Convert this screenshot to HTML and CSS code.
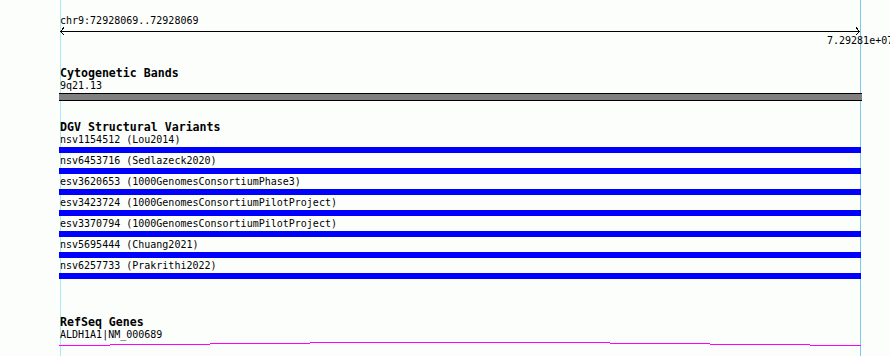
FILE: index.html
```html
<!DOCTYPE html>
<html>
  <head>
    <meta charset="utf-8">
    <meta name="viewport" content="width=device-width, initial-scale=1.0">
    <title>Track view</title>
    <link rel="stylesheet" href="styles.css">
  </head>
  <body>
    <div class="view">
      <div class="tracks">
        <div class="ruler">
          <div class="ruler-label">chr9:72928069..72928069</div>
          <svg class="ruler-axis" width="800" height="8" viewBox="0 0 800 8">
            <line x1="0" y1="4.5" x2="800" y2="4.5" />
            <polyline points="4,0.5 0.5,4.5 4,8" />
            <polyline points="796,0.5 799.5,4.5 796,8" />
          </svg>
          <div class="ruler-end">7.29281e+07</div>
        </div>

        <section class="track track-bands">
          <h2>Cytogenetic Bands</h2>
          <div class="feature-label">9q21.13</div>
          <div class="band"></div>
        </section>

        <section class="track track-dgv">
          <h2>DGV Structural Variants</h2>
          <div class="feature">
            <div class="feature-label">nsv1154512 (Lou2014)</div>
            <div class="bar"></div>
          </div>
          <div class="feature">
            <div class="feature-label">nsv6453716 (Sedlazeck2020)</div>
            <div class="bar"></div>
          </div>
          <div class="feature">
            <div class="feature-label">esv3620653 (1000GenomesConsortiumPhase3)</div>
            <div class="bar"></div>
          </div>
          <div class="feature">
            <div class="feature-label">esv3423724 (1000GenomesConsortiumPilotProject)</div>
            <div class="bar"></div>
          </div>
          <div class="feature">
            <div class="feature-label">esv3370794 (1000GenomesConsortiumPilotProject)</div>
            <div class="bar"></div>
          </div>
          <div class="feature">
            <div class="feature-label">nsv5695444 (Chuang2021)</div>
            <div class="bar"></div>
          </div>
          <div class="feature">
            <div class="feature-label">nsv6257733 (Prakrithi2022)</div>
            <div class="bar"></div>
          </div>
        </section>

        <section class="track track-genes">
          <h2>RefSeq Genes</h2>
          <div class="feature-label">ALDH1A1|NM_000689</div>
          <svg class="gene" width="802" height="6" viewBox="0 0 802 6">
            <rect x="0" y="4" width="51" height="1" />
            <rect x="51" y="3" width="100" height="1" />
            <rect x="151" y="2" width="100" height="1" />
            <rect x="251" y="1" width="300" height="1" />
            <rect x="551" y="2" width="100" height="1" />
            <rect x="651" y="3" width="100" height="1" />
            <rect x="751" y="4" width="51" height="1" />
          </svg>
        </section>
      </div>
    </div>
  </body>
</html>
```

FILE: styles.css
```css
html, body {
  width: 100%;
  height: 100%;
  margin: 0;
  padding: 0;
  background-color: #fcfefc;
  color: #000;
  font-family: "DejaVu Sans Mono", "Liberation Mono", monospace;
  font-size: 10px;
  overflow: hidden;
}
.view {
  position: relative;
  width: 890px;
  height: 356px;
  box-sizing: border-box;
  padding: 15px 0 0 60px;
}
/* guide lines at the view edges, behind the tracks */
.view::before,
.view::after {
  content: "";
  position: absolute;
  top: 0;
  bottom: 0;
  width: 1px;
  z-index: 0;
}
.view::before {
  left: 60px;
  background: #a8ecf0;
}
.view::after {
  left: 860px;
  background: #7ec8f0;
}
.tracks {
  position: relative;
  z-index: 1;
  width: 800px;
  display: flex;
  flex-direction: column;
}
.ruler-label,
.ruler-end,
.feature-label {
  line-height: 12px;
  white-space: nowrap;
}
.ruler-axis {
  display: block;
  shape-rendering: crispEdges;
}
.ruler-axis line,
.ruler-axis polyline {
  stroke: #000;
  stroke-width: 1;
  fill: none;
}
.ruler-end {
  margin-left: 767px;
}
.track h2 {
  margin: 0;
  font-size: 11.6px;
  font-weight: bold;
  line-height: 14px;
}
.track-bands {
  margin-top: 19px;
}
.band {
  margin: 1px -2px 0 -1px;
  height: 6px;
  background: #808080;
  border-top: 1px solid #000;
  border-bottom: 1px solid #000;
}
.track-dgv {
  margin-top: 19px;
}
.feature {
  display: flex;
  flex-direction: column;
  padding-bottom: 2px;
}
.bar {
  margin: 1px -1px 0 -1px;
  height: 6px;
  background: #0000ff;
}
.track-genes {
  margin-top: 34px;
}
.gene {
  display: block;
  margin-left: -1px;
  fill: #ff00ff;
  shape-rendering: crispEdges;
}
```
